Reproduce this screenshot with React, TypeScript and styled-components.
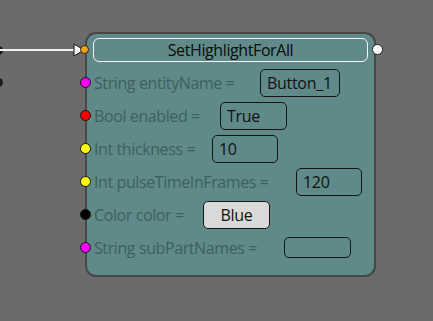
import React from 'react';
import styled, { createGlobalStyle } from 'styled-components';

interface Field {
  type: string;
  name: string;
  pin: string;
  value: string;
  boxAt: number;
  boxWidth: number;
  boxHeight?: number;
  button?: boolean;
}

const fields: Field[] = [
  { type: 'String', name: 'entityName', pin: '#ff00ff', value: 'Button_1', boxAt: 260, boxWidth: 80 },
  { type: 'Bool', name: 'enabled', pin: '#ff0000', value: 'True', boxAt: 220, boxWidth: 67 },
  { type: 'Int', name: 'thickness', pin: '#ffff00', value: '10', boxAt: 212, boxWidth: 66 },
  { type: 'Int', name: 'pulseTimeInFrames', pin: '#ffff00', value: '120', boxAt: 296, boxWidth: 66 },
  { type: 'Color', name: 'color', pin: '#000000', value: 'Blue', boxAt: 203, boxWidth: 67, button: true },
  { type: 'String', name: 'subPartNames', pin: '#ff00ff', value: '', boxAt: 284, boxWidth: 67, boxHeight: 21 }
];

// label column starts at x=93 in the canvas
const LABEL_X = 93;

const App: React.FC = () => {
  return (
    <>
      <GlobalStyle />
      <Canvas>
        <OffscreenPin $top={50} />
        <OffscreenPin $top={82} />
        <Wire />

        <Node>
          <Header>
            <ExecArrow viewBox="0 0 12 14">
              <path d="M1 1 L11 7 L1 13 Z" fill="#ffffff" stroke="#111" strokeWidth="1" />
            </ExecArrow>
            <ExecIn />
            <Title>SetHighlightForAll</Title>
            <ExecOut />
          </Header>

          <Fields>
            {fields.map((f) => (
              <Row key={f.name}>
                <Pin $color={f.pin} />
                <Label $width={f.boxAt - LABEL_X}>
                  {f.type} {f.name} =
                </Label>
                <ValueBox $width={f.boxWidth} $height={f.boxHeight ?? 28} $button={f.button}>
                  {f.value}
                </ValueBox>
              </Row>
            ))}
          </Fields>
        </Node>
      </Canvas>
    </>
  );
};

const GlobalStyle = createGlobalStyle`
  * {
    box-sizing: border-box;
  }
  html, body {
    margin: 0;
    padding: 0;
    background: #6b6b6b;
  }
  body {
    font-family: "Open Sans", "Noto Sans", sans-serif;
  }
`;

const Canvas = styled.div`
  position: relative;
  width: 433px;
  height: 321px;
  overflow: hidden;
  background: #6b6b6b;
`;

const OffscreenPin = styled.div<{ $top: number }>`
  position: absolute;
  left: -6px;
  top: ${({ $top }) => $top - 4}px;
  width: 9px;
  height: 9px;
  border-radius: 50%;
  background: #1c1c1c;
`;

const Wire = styled.div`
  position: absolute;
  left: 0;
  top: 49px;
  width: 75px;
  height: 2px;
  background: #f2f2f2;
`;

const Node = styled.div`
  position: absolute;
  left: 85px;
  top: 32px;
  width: 291px;
  height: 245px;
  display: flex;
  flex-direction: column;
  gap: 4px;
  padding: 4px 6px 0 6px;
  background: #608a89;
  border: 2px solid #474747;
  border-radius: 11px;
`;

const Header = styled.div`
  position: relative;
  height: 24px;
  display: flex;
  align-items: center;
  justify-content: center;
  border: 1.5px solid #f4f4f4;
  border-radius: 6px;
`;

const Title = styled.span`
  font-size: 16px;
  color: #0a0a0a;
  letter-spacing: -0.4px;
`;

const ExecArrow = styled.svg`
  position: absolute;
  left: -21px;
  top: 3.5px;
  width: 12px;
  height: 14px;
`;

const ExecIn = styled.div`
  position: absolute;
  left: -14px;
  top: 6px;
  width: 9px;
  height: 9px;
  border-radius: 50%;
  background: #f5a300;
  border: 1px solid #222;
`;

const ExecOut = styled.div`
  position: absolute;
  right: -16px;
  top: 5px;
  width: 11px;
  height: 11px;
  border-radius: 50%;
  background: #ffffff;
  border: 1px solid #222;
`;

const Fields = styled.div`
  display: flex;
  flex-direction: column;
`;

const Row = styled.div`
  position: relative;
  height: 33px;
  display: flex;
  align-items: center;
`;

const Pin = styled.div<{ $color: string }>`
  position: absolute;
  left: -13px;
  top: 11px;
  width: 11px;
  height: 11px;
  border-radius: 50%;
  background: ${({ $color }) => $color};
  border: 1px solid #111;
`;

const Label = styled.span<{ $width: number }>`
  flex: none;
  width: ${({ $width }) => $width}px;
  padding-left: 1px;
  font-size: 16px;
  color: #3e5f5f;
  letter-spacing: -0.4px;
  white-space: nowrap;
`;

const ValueBox = styled.div<{ $width: number; $height: number; $button?: boolean }>`
  flex: none;
  width: ${({ $width }) => $width}px;
  height: ${({ $height }) => $height}px;
  display: flex;
  align-items: center;
  justify-content: ${({ $button }) => ($button ? 'center' : 'flex-start')};
  padding: 0 6px;
  border: 1.5px solid #151515;
  border-radius: 5px;
  background: ${({ $button }) => ($button ? '#d9d9d9' : 'transparent')};
  font-size: 16px;
  letter-spacing: -0.3px;
  color: #111;
`;

export default App;
